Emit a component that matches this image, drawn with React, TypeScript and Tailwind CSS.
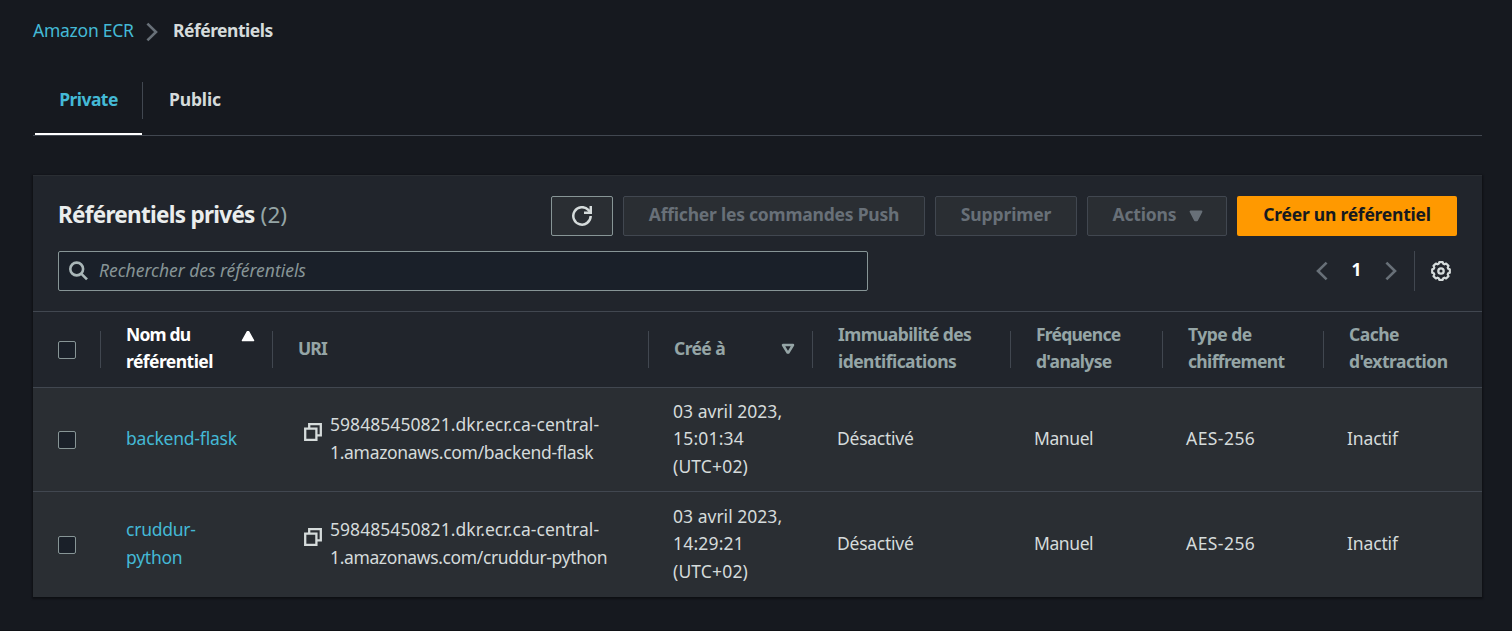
import type { ReactNode } from "react";

const rowGrid =
  "grid grid-cols-[68px_172px_376px_164px_198px_152px_161px_1fr] items-center";

function Checkbox() {
  return (
    <div className="flex pl-[25px]">
      <span
        role="checkbox"
        aria-checked={false}
        className="h-[18px] w-[18px] rounded-[2px] border border-[#879596] bg-[#1a2029]"
      />
    </div>
  );
}

function CopyIcon() {
  return (
    <svg viewBox="0 0 18 18" className="mt-[12px] h-[18px] w-[18px] shrink-0" fill="none" stroke="#d5dbdb" strokeWidth="2.3">
      <path d="M1.2 5.6h11.2v11.2H1.2z" />
      <path d="M5.2 5V1.2h11.6v11.2H13" />
    </svg>
  );
}

function Chevron({ flip = false }: { flip?: boolean }) {
  return (
    <svg viewBox="0 0 12 20" className={flip ? "h-5 w-3 -scale-x-100" : "h-5 w-3"} fill="none" stroke="#687078" strokeWidth="2.6">
      <path d="M1.4 1.6 10 10l-8.6 8.4" />
    </svg>
  );
}

function HeaderCell({ children, divider = true, icon }: { children?: ReactNode; divider?: boolean; icon?: ReactNode }) {
  return (
    <div className={`flex h-[37px] items-center ${divider ? "border-r border-[#414750]" : ""}`}>
      <div className="flex-1 whitespace-nowrap pb-[3px] pl-[25px]">{children}</div>
      {icon}
    </div>
  );
}

interface Repo {
  name: ReactNode;
  uriTail: ReactNode;
  time: string;
  height: string;
}

const repos: Repo[] = [
  {
    name: <span className="tracking-[-0.2px]">backend-flask</span>,
    uriTail: <span className="tracking-[-0.31px]">1.amazonaws.com/backend-flask</span>,
    time: "15:01:34",
    height: "h-[104px] border-b border-[#414750]",
  },
  {
    name: (
      <span className="tracking-[-0.24px]">
        cruddur-
        <br />
        python
      </span>
    ),
    uriTail: <span className="tracking-[-0.37px]">1.amazonaws.com/cruddur-python</span>,
    time: "14:29:21",
    height: "h-[105px]",
  },
];

function RepoRow({ repo }: { repo: Repo }) {
  return (
    <div className={`${rowGrid} ${repo.height} bg-[#2a2e33] leading-[27.5px] text-[#d5dbdb]`}>
      <Checkbox />
      <a className="pb-[2px] pl-[25px] text-[#44b9d6]">{repo.name}</a>
      <div className="flex gap-2 whitespace-nowrap pb-[2px] pl-[31px]">
        <CopyIcon />
        <div>
          <span className="tracking-[0.05px]">598485450821.dkr.ecr.ca-central-</span>
          <br />
          {repo.uriTail}
        </div>
      </div>
      <div className="whitespace-nowrap pb-px pl-[24px]">
        <span className="tracking-[0.02px]">03 avril 2023,</span>
        <br />
        <span className="tracking-[0.2px]">{repo.time}</span>
        <br />
        <span className="tracking-[0.15px]">(UTC+02)</span>
      </div>
      <div className="pb-[2px] pl-[24px] tracking-[-0.25px]">Désactivé</div>
      <div className="pb-[2px] pl-[23px] tracking-[-0.42px]">Manuel</div>
      <div className="pb-[2px] pl-[23px] tracking-[0.45px]">AES-256</div>
      <div className="pb-[2px] pl-[23px] tracking-[-0.14px]">Inactif</div>
    </div>
  );
}

const disabledButton =
  "flex h-10 items-center justify-center rounded-[2px] border border-[#414750] bg-[#2a2e33] pb-[2px] font-bold text-[#687078]";

export default function App() {
  return (
    <div className="h-[631px] overflow-hidden border-b border-[#101216] bg-[#16191f] pl-[33px] pr-[30px] font-['Noto_Sans','Open_Sans',sans-serif] text-[17.5px] leading-[27.5px] text-[#d5dbdb]">
      <nav className="flex h-[62px] items-center">
        <a className="w-[113px] tracking-[-0.25px] text-[#44b9d6]">Amazon ECR</a>
        <div className="mt-[2px]">
          <Chevron />
        </div>
        <span className="ml-[15px] font-bold tracking-[-0.5px]">Référentiels</span>
      </nav>

      <div className="flex h-[74px] border-b border-[#414750] pt-5 font-bold">
        <div className="ml-[2px] flex w-[107px] justify-center border-b-2 border-white pt-[4px] tracking-[-0.55px] text-[#44b9d6]">
          Private
        </div>
        <div className="h-[37px] border-l border-[#414750] pl-[26px] pt-[4px] tracking-[-0.16px]">Public</div>
      </div>

      <main className="mt-[39px] h-[422px] border-t border-[#2a2e33] bg-[#21252c] shadow-[0_1px_2px_1px_rgba(0,0,0,0.4)]">
        <div className="h-[135px] px-[25px] pt-5">
          <div className="flex h-10 items-center">
            <h2 className="flex-1 pb-[3px] text-[22.5px] font-bold text-[#eaeded]">
              <span className="tracking-[-0.72px]">Référentiels privés</span>{" "}
              <span className="font-normal tracking-[0.1px] text-[#95a5a6]">(2)</span>
            </h2>
            <div className="flex gap-2.5">
              <button className="flex h-10 w-[62px] items-center justify-center rounded-[2px] border border-[#879596] bg-[#2a2e33]">
                <svg viewBox="0 0 20 20" className="h-5 w-5" fill="none" stroke="#d5dbdb" strokeWidth="2.5">
                  <path d="M18.7 10a8.7 8.7 0 1 1-2.4-6.1L18 6" />
                  <path d="M18.8 0v6.7H12" />
                </svg>
              </button>
              <button className={`${disabledButton} w-[302px] tracking-[-0.22px]`}>Afficher les commandes Push</button>
              <button className={`${disabledButton} w-[142px] tracking-[-0.1px]`}>Supprimer</button>
              <button className={`${disabledButton} w-[140px] gap-[13px] pl-[2px] tracking-[-0.18px]`}>
                Actions
                <svg viewBox="0 0 14 12" className="mt-[2px] h-3 w-3.5" fill="#687078">
                  <path d="M1.5 1.5h11L8 10.4H6z" stroke="#687078" strokeWidth="1.8" strokeLinejoin="round" />
                </svg>
              </button>
              <button className="flex h-10 w-[220px] items-center justify-center rounded-[2px] bg-[#ff9900] pb-[2px] font-bold tracking-[-0.24px] text-[#16191f]">
                Créer un référentiel
              </button>
            </div>
          </div>

          <div className="mt-[15px] flex h-10">
            <div className="flex w-[810px] items-center rounded-[2px] border border-[#879596] bg-[#1a2029] pl-2.5">
              <svg viewBox="0 0 20 20" className="h-5 w-5" fill="none" stroke="#aab7b8" strokeWidth="2.6">
                <circle cx="7.7" cy="8" r="6.4" />
                <path d="m12.2 12.6 5.8 5.8" />
              </svg>
              <span className="ml-2.5 italic tracking-[-0.03px] text-[#879596]">Rechercher des référentiels</span>
            </div>
            <div className="ml-auto flex items-center">
              <Chevron flip />
              <span className="w-[57px] pb-[2px] text-center font-bold text-white">1</span>
              <Chevron />
              <div className="ml-[17px] h-full border-l border-[#414750]" />
              <svg viewBox="0 0 20 20" className="ml-[16px] mr-[6px] h-5 w-5" fill="none" stroke="#d5dbdb">
                <path
                  strokeWidth="2.2"
                  strokeLinejoin="round"
                  d="M8.3 1.2h3.4l.6 1.6 1.1.5 1.7-.8 2.4 2.4-.8 1.7.5 1.1 1.6.6v3.4l-1.6.6-.5 1.1.8 1.7-2.4 2.4-1.7-.8-1.1.5-.6 1.6H8.3l-.6-1.6-1.1-.5-1.7.8-2.4-2.4.8-1.7-.5-1.1-1.6-.6V8.3l1.6-.6.5-1.1-.8-1.7 2.4-2.4 1.7.8 1.1-.5z"
                />
                <circle cx="10" cy="10" r="2.7" strokeWidth="2.3" />
              </svg>
            </div>
          </div>
        </div>

        <div className={`${rowGrid} h-[77px] border-y border-[#414750] font-bold leading-[27px] text-[#95a5a6]`}>
          <div className="flex h-[37px] items-center border-r border-[#414750]">
            <Checkbox />
          </div>
          <HeaderCell
            icon={
              <svg viewBox="0 0 14 12" className="mb-[28px] mr-[17px] h-3 w-3.5" fill="#fff">
                <path d="M1.4 10.6h11.2L7.6 1.6H6.4z" stroke="#fff" strokeWidth="1.4" strokeLinejoin="round" />
              </svg>
            }
          >
            <span className="text-white">
              <span className="tracking-[-0.8px]">Nom du</span>
              <br />
              <span className="tracking-[-0.55px]">référentiel</span>
            </span>
          </HeaderCell>
          <HeaderCell>
            <span className="tracking-[-0.9px]">URI</span>
          </HeaderCell>
          <HeaderCell
            icon={
              <svg viewBox="0 0 14 12" className="mb-px mr-[17px] h-3 w-3.5" fill="none">
                <path d="M2 2h10L7.4 9.6h-.8z" stroke="#95a5a6" strokeWidth="2.5" strokeLinejoin="round" />
              </svg>
            }
          >
            <span className="tracking-[-0.6px]">Créé à</span>
          </HeaderCell>
          <HeaderCell>
            <span className="tracking-[-0.61px]">Immuabilité des</span>
            <br />
            <span className="tracking-[-0.54px]">identifications</span>
          </HeaderCell>
          <HeaderCell>
            <span className="tracking-[-0.77px]">Fréquence</span>
            <br />
            <span className="tracking-[-0.7px]">d'analyse</span>
          </HeaderCell>
          <HeaderCell>
            <span className="tracking-[-0.5px]">Type de</span>
            <br />
            <span className="tracking-[-0.66px]">chiffrement</span>
          </HeaderCell>
          <HeaderCell divider={false}>
            <span className="tracking-[-0.5px]">Cache</span>
            <br />
            <span className="tracking-[-0.5px]">d'extraction</span>
          </HeaderCell>
        </div>

        {repos.map((repo) => (
          <RepoRow key={repo.time} repo={repo} />
        ))}
      </main>
    </div>
  );
}
